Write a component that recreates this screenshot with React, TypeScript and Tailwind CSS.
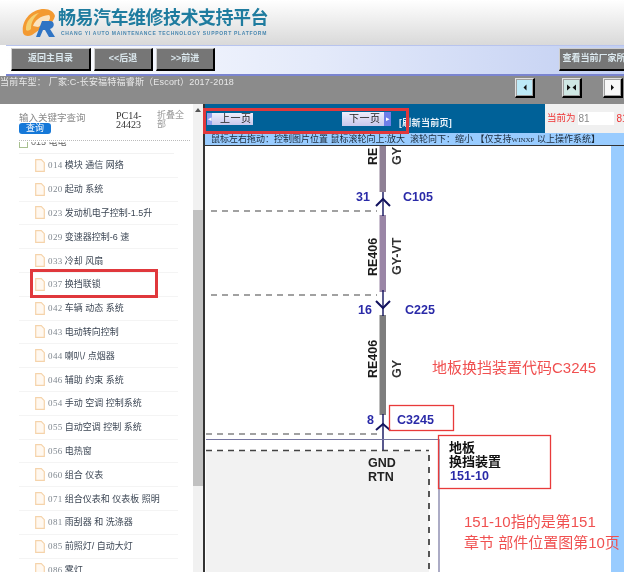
const items: [string, string][] = [
  ["014", "模块 通信 网络"],
  ["020", "起动 系统"],
  ["023", "发动机电子控制-1.5升"],
  ["029", "变速器控制-6 速"],
  ["033", "冷却 风扇"],
  ["037", "换挡联锁"],
  ["042", "车辆 动态 系统"],
  ["043", "电动转向控制"],
  ["044", "喇叭/ 点烟器"],
  ["046", "辅助 约束 系统"],
  ["054", "手动 空调 控制系统"],
  ["055", "自动空调 控制 系统"],
  ["056", "电热窗"],
  ["060", "组合 仪表"],
  ["071", "组合仪表和 仪表板 照明"],
  ["081", "雨刮器 和 洗涤器"],
  ["085", "前照灯/ 自动大灯"],
  ["086", "雾灯"],
];

function DocIcon() {
  return (
    <svg width="10" height="13" viewBox="0 0 10 13" className="shrink-0">
      <path d="M0.7 0.7H6.3L9.3 3.7V12.3H0.7Z" fill="#fff8f0" stroke="#f5d3aa" strokeWidth="1.2" />
    </svg>
  );
}

function ToolButton({ label, w }: { label: string; w: string }) {
  return (
    <div className={`${w} h-[23px] shrink-0 flex items-center justify-center bg-[#767676] border-t border-l border-[#cfcfcf] border-r-2 border-b-2 border-r-black border-b-black text-[9px] text-[#dbe8ee] font-bold whitespace-nowrap overflow-hidden`}>
      {label}
    </div>
  );
}

function ZoomIcon({ kind }: { kind: number }) {
  return (
    <div className="w-[20px] h-[20px] bg-[#a0a0a0] border-t border-l border-[#e0e0e0] border-r-2 border-b-2 border-r-black border-b-black flex items-center justify-center">
      <svg width="15" height="15" viewBox="0 0 15 15">
        <rect width="15" height="15" fill={kind === 0 ? "#bdeaf8" : kind === 1 ? "#cfe8e4" : "#f8f8f8"} />
        {kind === 0 && <path d="M6.500 7.500L9.500 4.500V10.500Z" fill="#111" />}
        {kind === 1 && <path d="M6.500 7.500L3 4.500V10.500ZM8.500 7.500L12 4.500V10.500Z" fill="#111" />}
        {kind === 2 && <path d="M9 7.500L6 4.500V10.500Z" fill="#111" />}
      </svg>
    </div>
  );
}

function Diagram() {
  const font = "'Liberation Sans','Noto Sans CJK SC',sans-serif";
  const blue = "#2a2aa8";
  const navy = "#12125e";
  const dash = "#444444";
  return (
    <svg width="406" height="426" viewBox="206 146 406 426" className="block overflow-visible" style={{ fontFamily: font }}>
      <rect x="206" y="146" width="406" height="426" fill="#ffffff" />
      <rect x="207" y="451" width="223" height="121" fill="#f2f2f2" />
      {/* wires */}
      <rect x="380.500" y="146" width="6.500" height="46" fill="#8f8095" />
      <rect x="380.500" y="215" width="6.500" height="77" fill="#9a86a6" />
      <rect x="380.500" y="315" width="6.500" height="100" fill="#7e7e7e" />
      <line x1="384" y1="192" x2="384" y2="216" stroke={navy} strokeWidth="1.4" />
      <line x1="384" y1="290" x2="384" y2="316" stroke={navy} strokeWidth="1.4" />
      <line x1="384" y1="414" x2="384" y2="450" stroke={navy} strokeWidth="1.4" />
      {/* connector marks */}
      <path d="M377 206L384 199L391 206" fill="none" stroke={navy} strokeWidth="2" />
      <path d="M377 301L384 308L391 301" fill="none" stroke={navy} strokeWidth="2" />
      <path d="M377 430L384 424L391 430" fill="none" stroke={navy} strokeWidth="2" />
      {/* dashed lines */}
      <line x1="212" y1="211" x2="378" y2="211" stroke={dash} strokeWidth="1.2" strokeDasharray="6 5" />
      <line x1="212" y1="295" x2="378" y2="295" stroke={dash} strokeWidth="1.2" strokeDasharray="6 5" />
      <line x1="207" y1="434" x2="378" y2="434" stroke={dash} strokeWidth="1.2" strokeDasharray="6 5" />
      <line x1="207" y1="450.500" x2="430" y2="450.500" stroke={dash} strokeWidth="1.4" strokeDasharray="6 5" />
      <line x1="430" y1="455" x2="430" y2="572" stroke={dash} strokeWidth="1.8" strokeDasharray="6 6" />
      <path d="M207 439.500H440V572" fill="none" stroke="#7676a0" strokeWidth="1.2" />
      {/* labels */}
      <g fontWeight="700" fontSize="12.500" fill="#1a1a1a">
        <text transform="translate(378 165) rotate(-90)">RE</text>
        <text transform="translate(402 165) rotate(-90)" fill="#333">GY</text>
        <text transform="translate(378 276) rotate(-90)">RE406</text>
        <text transform="translate(402 275) rotate(-90)" fill="#333">GY-VT</text>
        <text transform="translate(378 378) rotate(-90)">RE406</text>
        <text transform="translate(402 378) rotate(-90)" fill="#333">GY</text>
      </g>
      <g fontWeight="700" fontSize="12.500" fill={blue}>
        <text x="357" y="201">31</text>
        <text x="404" y="201">C105</text>
        <text x="359" y="314">16</text>
        <text x="406" y="314">C225</text>
        <text x="368" y="424">8</text>
        <text x="398" y="424">C3245</text>
        <text x="451" y="480">151-10</text>
      </g>
      <g fontWeight="700" fontSize="12.500" fill="#222">
        <text x="369" y="467">GND</text>
        <text x="369" y="481">RTN</text>
      </g>
      <g fontWeight="700" fontSize="13" fill="#111">
        <text x="450" y="452">地板</text>
        <text x="450" y="466">换挡装置</text>
      </g>
      {/* red annotations */}
      <rect x="390.500" y="405.500" width="64" height="25" fill="none" stroke="#e83a3a" strokeWidth="1.3" />
      <rect x="439.500" y="435.500" width="112" height="53" fill="none" stroke="#e83a3a" strokeWidth="1.3" />
      <g fontSize="15" fill="#f05050">
        <text x="433" y="373">地板换挡装置代码C3245</text>
        <text x="465" y="527">151-10指的是第151</text>
        <text x="465" y="548">章节 部件位置图第10页</text>
      </g>
    </svg>
  );
}

export default function App() {
  return (
    <div className="w-[624px] h-[572px] overflow-hidden relative bg-white blur-[0.4px] font-['Liberation_Sans','Noto_Sans_CJK_SC',sans-serif]">
      {/* header */}
      <div className="h-[45px] bg-gradient-to-b from-white to-[#d9d9d9] flex items-center pl-[22px]">
        <svg width="34" height="30" viewBox="0 0 34 30" className="shrink-0">
          <path d="M1 25C-1 13 9 1 22 1C28 1 32 4 33 8C31 15 26 20 20 20L10 27C6 29 2 28 1 25Z" fill="#f39a32" />
          <path d="M4 22C3 14 10 6 17 5C12 9 9 14 9 21C7 23 5 23 4 22Z" fill="#f4d070" />
          <path d="M11 18C13 12 18 8 27 7C29 9 28 13 24 15L16 19Z" fill="#fbe3c0" />
          <path d="M14 29L20 13H28C33 13 33 20 28 21L33 29H27L23 22H21L18 29Z" fill="#2f74c4" />
        </svg>
        <div className="ml-[2px] flex flex-col items-start">
          <div className="text-[18px] leading-[20px] font-bold text-[#1f7c9f] tracking-[-0.5px] whitespace-nowrap">畅易汽车维修技术支持平台</div>
          <div className="text-[5px] leading-[8px] font-bold text-[#4a88b0] tracking-[0.7px] whitespace-nowrap ml-[3px] mt-[1px]">CHANG YI AUTO MAINTENANCE TECHNOLOGY SUPPORT PLATFORM</div>
        </div>
      </div>

      {/* toolbar */}
      <div className="h-[31px] ml-[6px] pl-[5px] pt-[2px] bg-gradient-to-r from-white via-[#e4eafa] to-[#c2cff2] border-t border-[#b8c4ee] border-b-2 border-b-[#7a84d0] flex items-start gap-[3px] overflow-hidden">
        <ToolButton label="返回主目录" w="w-[80px]" />
        <ToolButton label="<<后退" w="w-[59px]" />
        <ToolButton label=">>前进" w="w-[59px]" />
        <div className="ml-[341px] flex-none">
          <ToolButton label="查看当前厂家所有" w="w-[80px]" />
        </div>
      </div>

      {/* info bar */}
      <div className="h-[28px] bg-[#8b8b8b] relative text-[9px] leading-[12px] text-[#e8e8e8] whitespace-nowrap tracking-[0.2px]">
        当前车型： 厂家:C-长安福特福睿斯（Escort）2017-2018
        <div className="absolute left-[515px] top-[2px]"><ZoomIcon kind={0} /></div>
        <div className="absolute left-[562px] top-[2px]"><ZoomIcon kind={1} /></div>
        <div className="absolute left-[603px] top-[2px]"><ZoomIcon kind={2} /></div>
      </div>

      {/* main */}
      <div className="flex h-[468px]">
        {/* sidebar */}
        <div className="w-[193px] shrink-0 h-full overflow-hidden bg-white relative">
          <div className="h-[37px] flex items-start pt-[7px] pl-[19px]">
            <div className="w-[97px] shrink-0">
              <div className="text-[9.500px] leading-[11px] text-[#8a8a8a] mt-[1px] whitespace-nowrap">输入关键字查询</div>
              <div className="w-[32px] h-[11px] rounded-[3px] bg-[#1578d8] text-white text-[9px] leading-[11px] text-center">查询</div>
            </div>
            <div className="w-[41px] shrink-0 text-[10px] leading-[9px] text-[#333] font-['Liberation_Serif','Noto_Sans_CJK_SC',serif]">PC14-<br />24423</div>
            <div className="w-[28px] shrink-0 text-[9px] leading-[9px] text-[#999]">折叠全部</div>
          </div>
          <div className="h-[3px] -mt-[1px] border-t border-dotted border-[#bbbbbb] ml-[19px] mr-[3px]" />
          <div className="h-[7px] -mt-[1px] ml-[19px] flex items-start overflow-hidden">
            <div className="w-[9px] h-[6px] border-l border-r border-b border-[#a8c090] shrink-0" />
            <span className="ml-[3px] -mt-[6px] text-[9px] leading-[12px] text-[#666] whitespace-nowrap">015 电电</span>
          </div>
          <div className="h-[5px] mx-[19px] border-b border-[#f2f2f2]" />
          <div className="pl-[19px] pr-[15px]">
            {items.map(([code, name]) => (
              <div key={code} className="h-[23.8px] flex items-center pl-[16px] border-b border-[#f4f4f4]">
                <DocIcon />
                <span className="ml-[3px] text-[9px] leading-[12px] text-[#808890] font-['Liberation_Serif',serif] tracking-[0.4px] shrink-0">{code}</span>
                <span className="ml-[2px] text-[9px] leading-[12px] text-[#3c4654] whitespace-nowrap">{name}</span>
              </div>
            ))}
          </div>
        </div>

        {/* scrollbar */}
        <div className="w-[10px] shrink-0 h-full bg-[#f1f1f1] relative">
          <div className="absolute top-[4px] left-[2px] w-0 h-0 border-l-[3px] border-r-[3px] border-b-[4px] border-l-transparent border-r-transparent border-b-[#555]" />
          <div className="absolute top-[106px] left-0 w-[10px] h-[276px] bg-[#c1c1c1]" />
        </div>

        {/* right */}
        <div className="flex-1 h-full border-l-2 border-[#333] flex flex-col min-w-0 overflow-hidden">
          <div className="h-[29px] flex shrink-0">
            <div className="w-[340px] bg-[#006198] relative shrink-0">
              <div className="absolute left-[2px] top-[9px] flex items-center h-[12px] w-[46px] bg-gradient-to-b from-[#eeeefc] to-[#c8c8ec] text-[10px] leading-[12px] text-[#222]">
                <span className="w-[5px] h-[12px] bg-[#8ea0ee] text-white text-[7px] leading-[12px] text-center shrink-0">◂</span>
                <span className="ml-[8px] tracking-[0.5px] whitespace-nowrap">上一页</span>
              </div>
              <div className="absolute left-[137px] top-[8px] flex items-center h-[14px] w-[49px] bg-gradient-to-b from-[#eeeefc] to-[#c8c8ec] text-[10px] leading-[12px] text-[#222]">
                <span className="ml-[7px] tracking-[0.5px] whitespace-nowrap">下一页</span>
                <span className="ml-auto w-[7px] h-[14px] bg-[#6e7ee8] text-white text-[7px] leading-[14px] text-center shrink-0">▸</span>
              </div>
              <div className="absolute left-[194px] top-[13px] text-[9px] leading-[12px] font-bold tracking-[0.3px] text-[#e8f0f8] whitespace-nowrap">[刷新当前页]</div>
            </div>
            <div className="flex-1 bg-[#f0f0f0] flex items-center pl-[2px] whitespace-nowrap overflow-hidden">
              <span className="text-[9.500px] text-[#ee3333]">当前为</span>
              <div className="ml-[2px] w-[36px] h-[13px] bg-white text-[10px] leading-[13px] text-[#888] pl-[1px] shrink-0">81</div>
              <span className="ml-[3px] text-[10px] text-[#ee3333]">81</span>
            </div>
          </div>
          <div className="h-[13px] shrink-0 bg-[#99ccff] border-b border-[#333] text-[9px] leading-[12px] text-[#1a2a3a] whitespace-nowrap pl-[6px] overflow-hidden">
            鼠标左右拖动：控制图片位置 鼠标滚轮向上:放大&nbsp;&nbsp;滚轮向下：缩小 <b>【</b>仅支持<span className="font-['Liberation_Serif',serif] text-[7px]">WINXP</span> 以上操作系统<b>】</b>
          </div>
          <div className="flex-1 flex min-h-0">
            <div className="w-[406px] shrink-0 relative z-10"><Diagram /></div>
            <div className="flex-1 bg-[#99ccff]" />
          </div>
        </div>
      </div>

      {/* red annotation frames over the page */}
      <div className="absolute left-[203px] top-[108px] w-[206px] h-[26px] border-[3px] border-[#e0383c] pointer-events-none" />
      <div className="absolute left-[30px] top-[269px] w-[128px] h-[29px] border-[3px] border-[#e0383c] pointer-events-none" />
    </div>
  );
}
